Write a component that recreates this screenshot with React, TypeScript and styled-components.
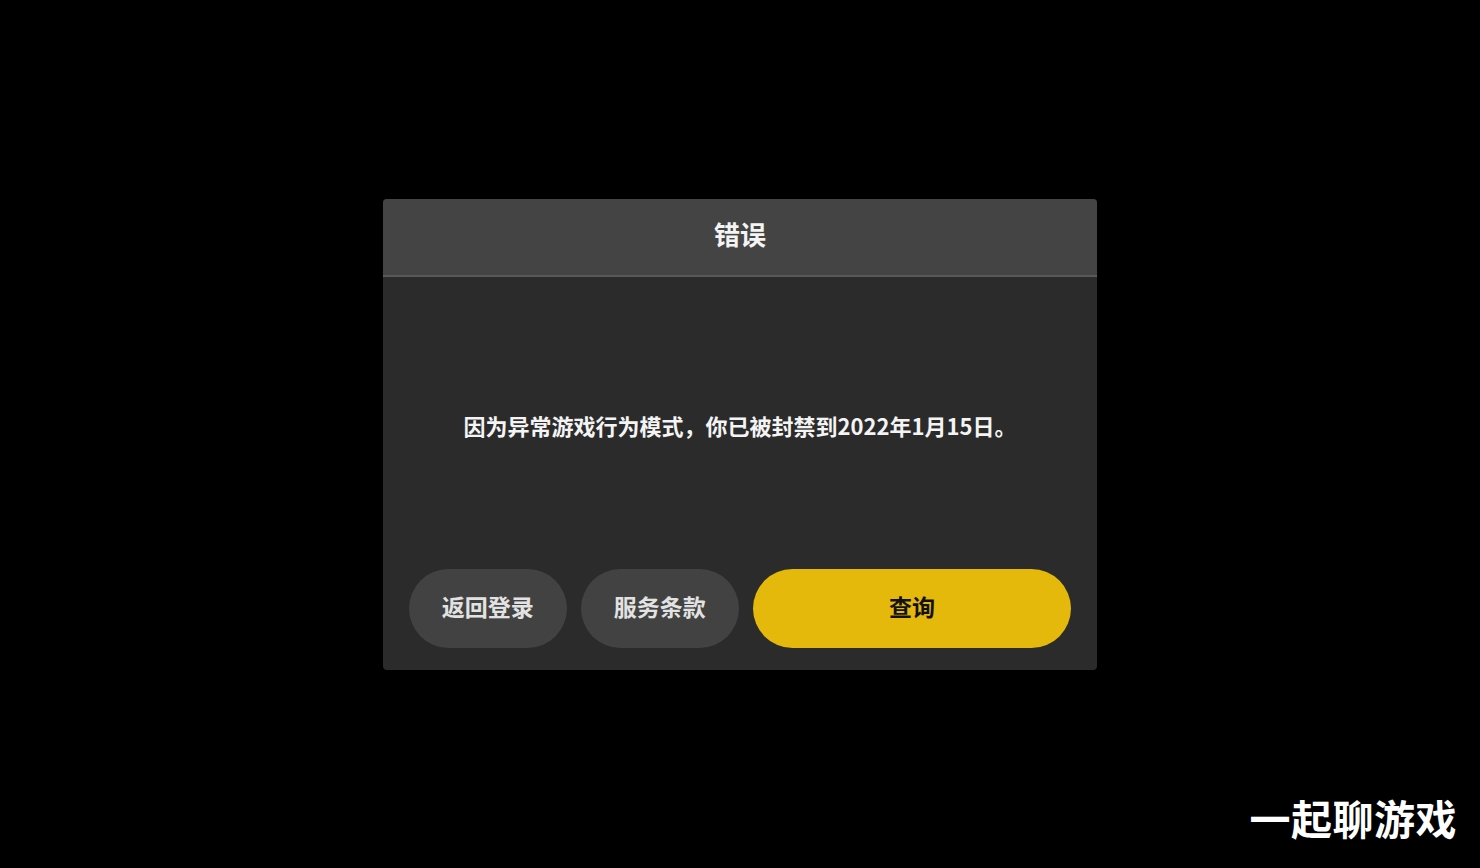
import React from "react";
import styled, { createGlobalStyle } from "styled-components";

const Global = createGlobalStyle`
  html, body { margin: 0; padding: 0; background: #000; }
  body {
    font-family: "Noto Sans CJK SC", "Noto Sans", sans-serif;
  }
  #root { height: 100vh; }
`;

const Screen = styled.div`
  position: relative;
  width: 100%;
  height: 868px;
  background: #000;
  display: flex;
  align-items: center;
  justify-content: center;
  overflow: hidden;
`;

const Dialog = styled.div`
  width: 714px;
  height: 471px;
  border-radius: 4px;
  overflow: hidden;
  background: #2b2b2b;
  display: flex;
  flex-direction: column;
`;

const Header = styled.div`
  height: 78px;
  box-sizing: border-box;
  padding-bottom: 6px;
  flex: none;
  background: #444444;
  border-bottom: 2px solid #595959;
  display: flex;
  align-items: center;
  justify-content: center;
  color: #f4f4f4;
  font-size: 26px;
  font-weight: 700;
`;

const Body = styled.div`
  flex: 1;
  display: flex;
  flex-direction: column;
`;

const Message = styled.div`
  flex: 1;
  display: flex;
  align-items: center;
  justify-content: center;
  padding-top: 4px;
  color: #f4f4f4;
  font-size: 22px;
  font-weight: 700;
`;

const Actions = styled.div`
  display: flex;
  gap: 14px;
  padding: 0 26px 22px;
`;

const Button = styled.button<{ $primary?: boolean; $width: number }>`
  width: ${(p) => p.$width}px;
  height: 79px;
  border: none;
  border-radius: 40px;
  background: ${(p) => (p.$primary ? "#e5b80c" : "#424242")};
  color: ${(p) => (p.$primary ? "#111" : "#e2e2e2")};
  font-family: inherit;
  font-size: 23px;
  font-weight: 700;
  display: flex;
  align-items: center;
  justify-content: center;
  padding: 0 0 5px;
`;

const Watermark = styled.div`
  position: absolute;
  right: 23px;
  bottom: 30px;
  color: #fff;
  font-size: 41px;
  font-weight: 700;
  letter-spacing: 0.5px;
  line-height: 1;
`;

export default function App() {
  return (
    <>
      <Global />
      <Screen>
        <Dialog>
          <Header>错误</Header>
          <Body>
            <Message>因为异常游戏行为模式，你已被封禁到2022年1月15日。</Message>
            <Actions>
              <Button $width={158}>返回登录</Button>
              <Button $width={159}>服务条款</Button>
              <Button $width={319} $primary>
                查询
              </Button>
            </Actions>
          </Body>
        </Dialog>
        <Watermark>一起聊游戏</Watermark>
      </Screen>
    </>
  );
}
